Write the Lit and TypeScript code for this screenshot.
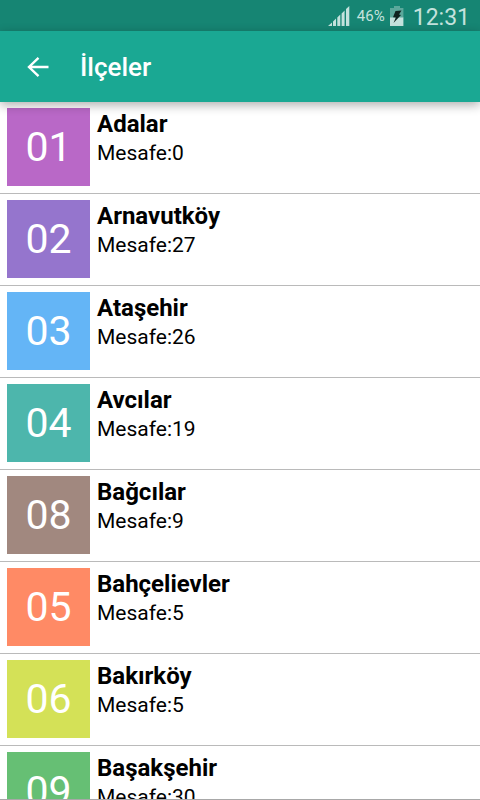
import { LitElement, html, css } from "lit";
import { customElement } from "lit/decorators.js";
import { styleMap } from "lit/directives/style-map.js";

interface District {
  code: string;
  name: string;
  distance: number;
  color: string;
}

const DISTRICTS: District[] = [
  { code: "01", name: "Adalar", distance: 0, color: "#b968c7" },
  { code: "02", name: "Arnavutköy", distance: 27, color: "#9575cd" },
  { code: "03", name: "Ataşehir", distance: 26, color: "#64b5f6" },
  { code: "04", name: "Avcılar", distance: 19, color: "#4db6ac" },
  { code: "08", name: "Bağcılar", distance: 9, color: "#a1887f" },
  { code: "05", name: "Bahçelievler", distance: 5, color: "#ff8a65" },
  { code: "06", name: "Bakırköy", distance: 5, color: "#d4e157" },
  { code: "09", name: "Başakşehir", distance: 30, color: "#66bf74" },
];

@customElement("status-bar")
class StatusBar extends LitElement {
  static styles = css`
    :host {
      display: flex;
      flex: none;
      align-items: center;
      justify-content: flex-end;
      height: 31px;
      padding-right: 10px;
      background: #168573;
      color: #c4e2dd;
    }
    .signal {
      margin-right: 7px;
    }
    .percent {
      font-size: 15px;
      margin-right: 5px;
    }
    .battery {
      margin-right: 9px;
    }
    .clock {
      font-size: 23px;
      line-height: 31px;
      padding-top: 3px;
    }
    svg {
      display: block;
    }
  `;

  render() {
    return html`
      <svg class="signal" width="22" height="20" viewBox="0 0 22 20" fill="#c4e2dd" aria-hidden="true">
        <path d="M0 20 L4 16.5 V20Z M5 15.5 L8 12.5 V20 H5Z M9.3 11.5 L12.3 8.5 V20 H9.3Z M13.6 7.5 L16.6 4.5 V20 H13.6Z M18 3 L21.3 0 V20 H18Z" />
      </svg>
      <span class="percent">46%</span>
      <svg class="battery" width="14" height="20" viewBox="0 0 14 20" aria-hidden="true">
        <path fill="#5ba89b" d="M4 0 H10 V2 H13.4 V12 H0 V2 H4Z" />
        <path fill="#c4e2dd" d="M0 11.5 H13.4 V20 H0Z" />
        <path fill="#10231f" d="M5.5 5 L11.5 4.5 L9 8.5 L11 9 L3.5 17 L5.8 11.5 L3 11.2Z" />
      </svg>
      <time class="clock">12:31</time>
    `;
  }
}

@customElement("district-row")
class DistrictRow extends LitElement {
  static properties = { district: { attribute: false } };
  declare district: District;

  static styles = css`
    :host {
      display: flex;
      gap: 7px;
      padding: 6px 7px 7px;
      border-bottom: 1px solid #bababa;
    }
    .tile {
      display: flex;
      flex: none;
      align-items: center;
      justify-content: center;
      width: 83px;
      height: 78px;
      color: #fff;
      font-size: 41px;
      font-weight: 400;
    }
    .name {
      margin: 0;
      font-size: 24px;
      line-height: 32px;
      font-weight: 700;
    }
    .distance {
      margin: 0;
      font-size: 21px;
      line-height: 26px;
    }
  `;

  render() {
    const { code, name, distance, color } = this.district;
    return html`
      <div class="tile" style=${styleMap({ background: color })}>${code}</div>
      <div>
        <h2 class="name">${name}</h2>
        <p class="distance">Mesafe:${distance}</p>
      </div>
    `;
  }
}

@customElement("app-root")
class AppRoot extends LitElement {
  static styles = css`
    :host {
      display: flex;
      flex-direction: column;
      box-sizing: border-box;
      height: 100vh;
      overflow: hidden;
      border-bottom: 1px solid #a8a8a8;
      background: #fff;
      color: #000;
      font-family: Roboto, sans-serif;
    }
    header {
      position: relative;
      z-index: 1;
      display: flex;
      flex: none;
      align-items: center;
      gap: 30px;
      height: 71px;
      padding-left: 26px;
      background: #1aa893;
      box-shadow: 0 3px 10px rgba(0, 0, 0, 0.32);
      color: #fff;
    }
    .back {
      padding: 0;
      border: 0;
      background: none;
      color: inherit;
      cursor: pointer;
    }
    .back svg {
      display: block;
    }
    h1 {
      margin: 0;
      font-size: 26px;
      line-height: 32px;
      font-weight: 500;
    }
    main {
      flex: 1;
      min-height: 0;
      overflow: hidden;
    }
  `;

  render() {
    return html`
      <status-bar></status-bar>
      <header>
        <button class="back" type="button" aria-label="Geri">
          <svg width="24" height="24" viewBox="0 0 24 24" fill="none" stroke="currentColor" stroke-width="2.4">
            <path d="M22.5 12 H3 M12.5 2.8 L3 12 L12.5 21.2" />
          </svg>
        </button>
        <h1>İlçeler</h1>
      </header>
      <main>
        ${DISTRICTS.map((d) => html`<district-row .district=${d}></district-row>`)}
      </main>
    `;
  }
}
